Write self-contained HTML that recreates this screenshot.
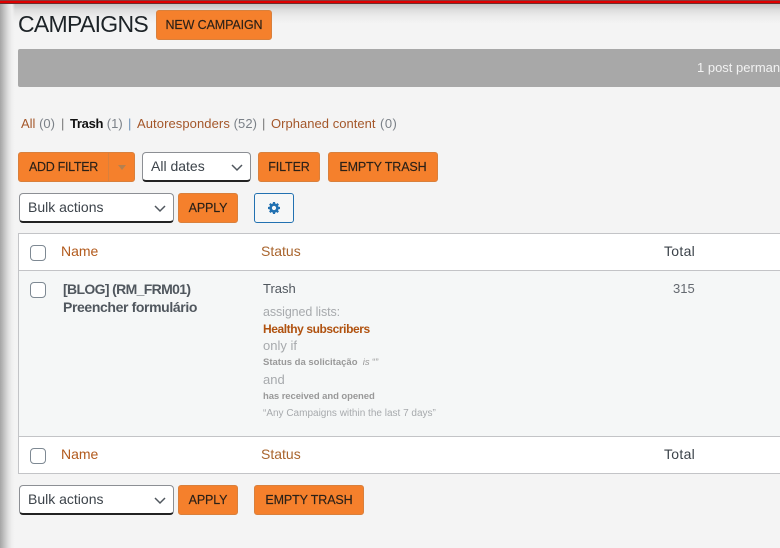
<!DOCTYPE html>
<html><head><meta charset="utf-8"><style>
html,body{margin:0;padding:0}
body{width:780px;height:548px;position:relative;overflow:hidden;background:#f4f4f4;font-family:"Liberation Sans",sans-serif;color:#3c434a}
.a{position:absolute;white-space:nowrap}
.shT{left:0;top:0;width:780px;height:24px;background:linear-gradient(#b4b4b4 0,#c4c4c4 18%,#dedede 42%,#ececec 68%,#f4f4f4 100%)}
.shL{left:0;top:0;width:15px;height:548px;background:linear-gradient(90deg,#a4a4a4 0,#c0c0c0 25%,#dfdfdf 55%,#f0f0f0 80%,rgba(244,244,244,0) 100%)}
.red{left:0;top:0;width:780px;height:4px;background:#e00000;border-top:1px solid #8a3a3a;border-bottom:1px solid #6a3030;box-sizing:border-box}
.btn{box-sizing:border-box;height:30px;background:#f5802c;border:1px solid #d9803c;border-radius:3px;color:#2b2118;font-size:12.5px;line-height:29px;text-align:center;letter-spacing:-.12px;-webkit-text-stroke:.15px #2b2118}
.sel{box-sizing:border-box;height:30px;background:#fff;border:1px solid #8c8f94;border-bottom:2px solid #222;border-radius:4px;color:#3c434a;font-size:14px;line-height:26px;padding-left:8px}
.sel svg{position:absolute;top:10px}
.cb{box-sizing:border-box;width:16px;height:16px;background:#fff;border:1px solid #7e8993;border-radius:4px}
.l{color:#a4572a}
.th{font-size:14px;color:#b25a1c}
.g{color:#a7aaad}
</style></head><body>
<div class="a shT"></div><div class="a shL"></div><div class="a red"></div>

<div class="a" style="left:18px;top:10px;font-size:23px;line-height:28px;color:#1d2327;letter-spacing:-.7px">CAMPAIGNS</div>
<div class="a btn" style="left:156px;top:10px;width:116px">NEW CAMPAIGN</div>

<div class="a" style="left:18px;top:49px;width:762px;height:38px;background:#a8a8a8;border-radius:2px 0 0 2px"></div>
<div class="a" style="left:697px;top:59px;font-size:13px;line-height:17px;color:#f2f2f2">1 post perman</div>

<div class="a" style="left:21px;top:115px;font-size:13px;line-height:17px;color:#7b8188"><span class="l">All</span> (0)</div>
<div class="a" style="left:61px;top:115px;font-size:13px;line-height:17px;color:#777">|</div>
<div class="a" style="left:70px;top:115px;font-size:13px;line-height:17px;color:#7b8188"><b style="color:#111;letter-spacing:-.3px">Trash</b> (1)</div>
<div class="a" style="left:128px;top:115px;font-size:13px;line-height:17px;color:#6f94b8">|</div>
<div class="a" style="left:137px;top:115px;font-size:13px;line-height:17px;color:#7b8188;letter-spacing:.08px"><span class="l">Autoresponders</span> (52)</div>
<div class="a" style="left:262px;top:115px;font-size:13px;line-height:17px;color:#777">|</div>
<div class="a" style="left:271px;top:115px;font-size:13px;line-height:17px;color:#7b8188"><span class="l" style="letter-spacing:.03px">Orphaned content</span></div>
<div class="a" style="left:380px;top:115px;font-size:13px;line-height:17px;color:#7b8188;letter-spacing:.5px">(0)</div>

<div class="a btn" style="left:18px;top:152px;width:117px;text-align:left;padding-left:10px;letter-spacing:-.3px">ADD FILTER
<span class="a" style="left:89px;top:0;width:1px;height:28px;background:#d9803c"></span>
<span class="a" style="left:99px;top:12px;width:0;height:0;border:4px solid transparent;border-top:5px solid #b5804f;border-bottom:0"></span></div>
<div class="a sel" style="left:142px;top:152px;width:109px">All dates<svg style="left:87px" width="14" height="9" viewBox="0 0 14 9"><path d="M2 2l5 5 5-5" fill="none" stroke="#50575e" stroke-width="1.5"/></svg></div>
<div class="a btn" style="left:258px;top:152px;width:62px">FILTER</div>
<div class="a btn" style="left:328px;top:152px;width:110px">EMPTY TRASH</div>

<div class="a sel" style="left:19px;top:193px;width:155px">Bulk actions<svg style="left:133px" width="14" height="9" viewBox="0 0 14 9"><path d="M2 2l5 5 5-5" fill="none" stroke="#50575e" stroke-width="1.5"/></svg></div>
<div class="a btn" style="left:178px;top:193px;width:60px">APPLY</div>
<div class="a" style="left:254px;top:193px;width:40px;height:30px;box-sizing:border-box;border:1px solid #2271b1;border-radius:3px;background:#f6f7f7">
<svg class="a" style="left:12px;top:7px" width="14" height="14" viewBox="0 0 14 14"><circle cx="7" cy="7" r="3.4" fill="none" stroke="#2271b1" stroke-width="2.6"/><g stroke="#2271b1" stroke-width="2.2"><path d="M7 1v2.4M7 10.6V13M1 7h2.4M10.6 7H13M2.8 2.8l1.7 1.7M9.5 9.5l1.7 1.7M11.2 2.8L9.5 4.5M4.5 9.5l-1.7 1.7"/></g></svg></div>

<div class="a" style="left:18px;top:233px;width:770px;height:241px;box-sizing:border-box;border:1px solid #c3c4c7;background:#fff"></div>
<div class="a" style="left:19px;top:270px;width:761px;height:167px;box-sizing:border-box;background:#f5f7f7;border-top:1px solid #c3c4c7;border-bottom:1px solid #c3c4c7"></div>

<div class="a cb" style="left:30px;top:245px"></div>
<div class="a th" style="left:61px;top:243px;line-height:17px">Name</div>
<div class="a th" style="left:261px;top:243px;line-height:17px;color:#a9652e">Status</div>
<div class="a" style="left:664px;top:243px;font-size:14px;line-height:17px;color:#3c434a;letter-spacing:.3px">Total</div>

<div class="a cb" style="left:30px;top:282px"></div>
<div class="a" style="left:63px;top:280px;font-size:14px;line-height:18px;font-weight:700;color:#50575e;letter-spacing:-.65px">[BLOG] (RM_FRM01)<br><span style="letter-spacing:-.38px">Preencher formulário</span></div>
<div class="a" style="left:263px;top:280px;font-size:13px;line-height:17px;color:#50575e">Trash</div>
<div class="a g" style="left:263px;top:304px;font-size:12.5px;line-height:17px;color:#a7aaad;letter-spacing:-.1px">assigned lists:</div>
<div class="a" style="left:263px;top:321px;font-size:12px;line-height:17px;font-weight:700;color:#b0520f;letter-spacing:-.42px">Healthy subscribers</div>
<div class="a g" style="left:263px;top:337px;font-size:13px;line-height:17px">only if</div>
<div class="a g" style="left:263px;top:355px;font-size:9.5px;line-height:16px;color:#999"><b>Status da solicitação</b>&nbsp; <i>is</i> “”</div>
<div class="a g" style="left:263px;top:371px;font-size:13px;line-height:17px">and</div>
<div class="a g" style="left:263px;top:389px;font-size:9.5px;line-height:16px;color:#999;letter-spacing:-.08px"><b>has received and opened</b></div>
<div class="a g" style="left:263px;top:406px;font-size:10px;line-height:15px">“Any Campaigns within the last 7 days”</div>
<div class="a" style="left:673px;top:280px;font-size:13px;line-height:17px;color:#646970">315</div>

<div class="a cb" style="left:30px;top:448px"></div>
<div class="a th" style="left:61px;top:446px;line-height:17px">Name</div>
<div class="a th" style="left:261px;top:446px;line-height:17px;color:#a9652e">Status</div>
<div class="a" style="left:664px;top:446px;font-size:14px;line-height:17px;color:#3c434a;letter-spacing:.3px">Total</div>

<div class="a sel" style="left:19px;top:485px;width:155px">Bulk actions<svg style="left:133px" width="14" height="9" viewBox="0 0 14 9"><path d="M2 2l5 5 5-5" fill="none" stroke="#50575e" stroke-width="1.5"/></svg></div>
<div class="a btn" style="left:178px;top:485px;width:60px">APPLY</div>
<div class="a btn" style="left:254px;top:485px;width:110px">EMPTY TRASH</div>
</body></html>
